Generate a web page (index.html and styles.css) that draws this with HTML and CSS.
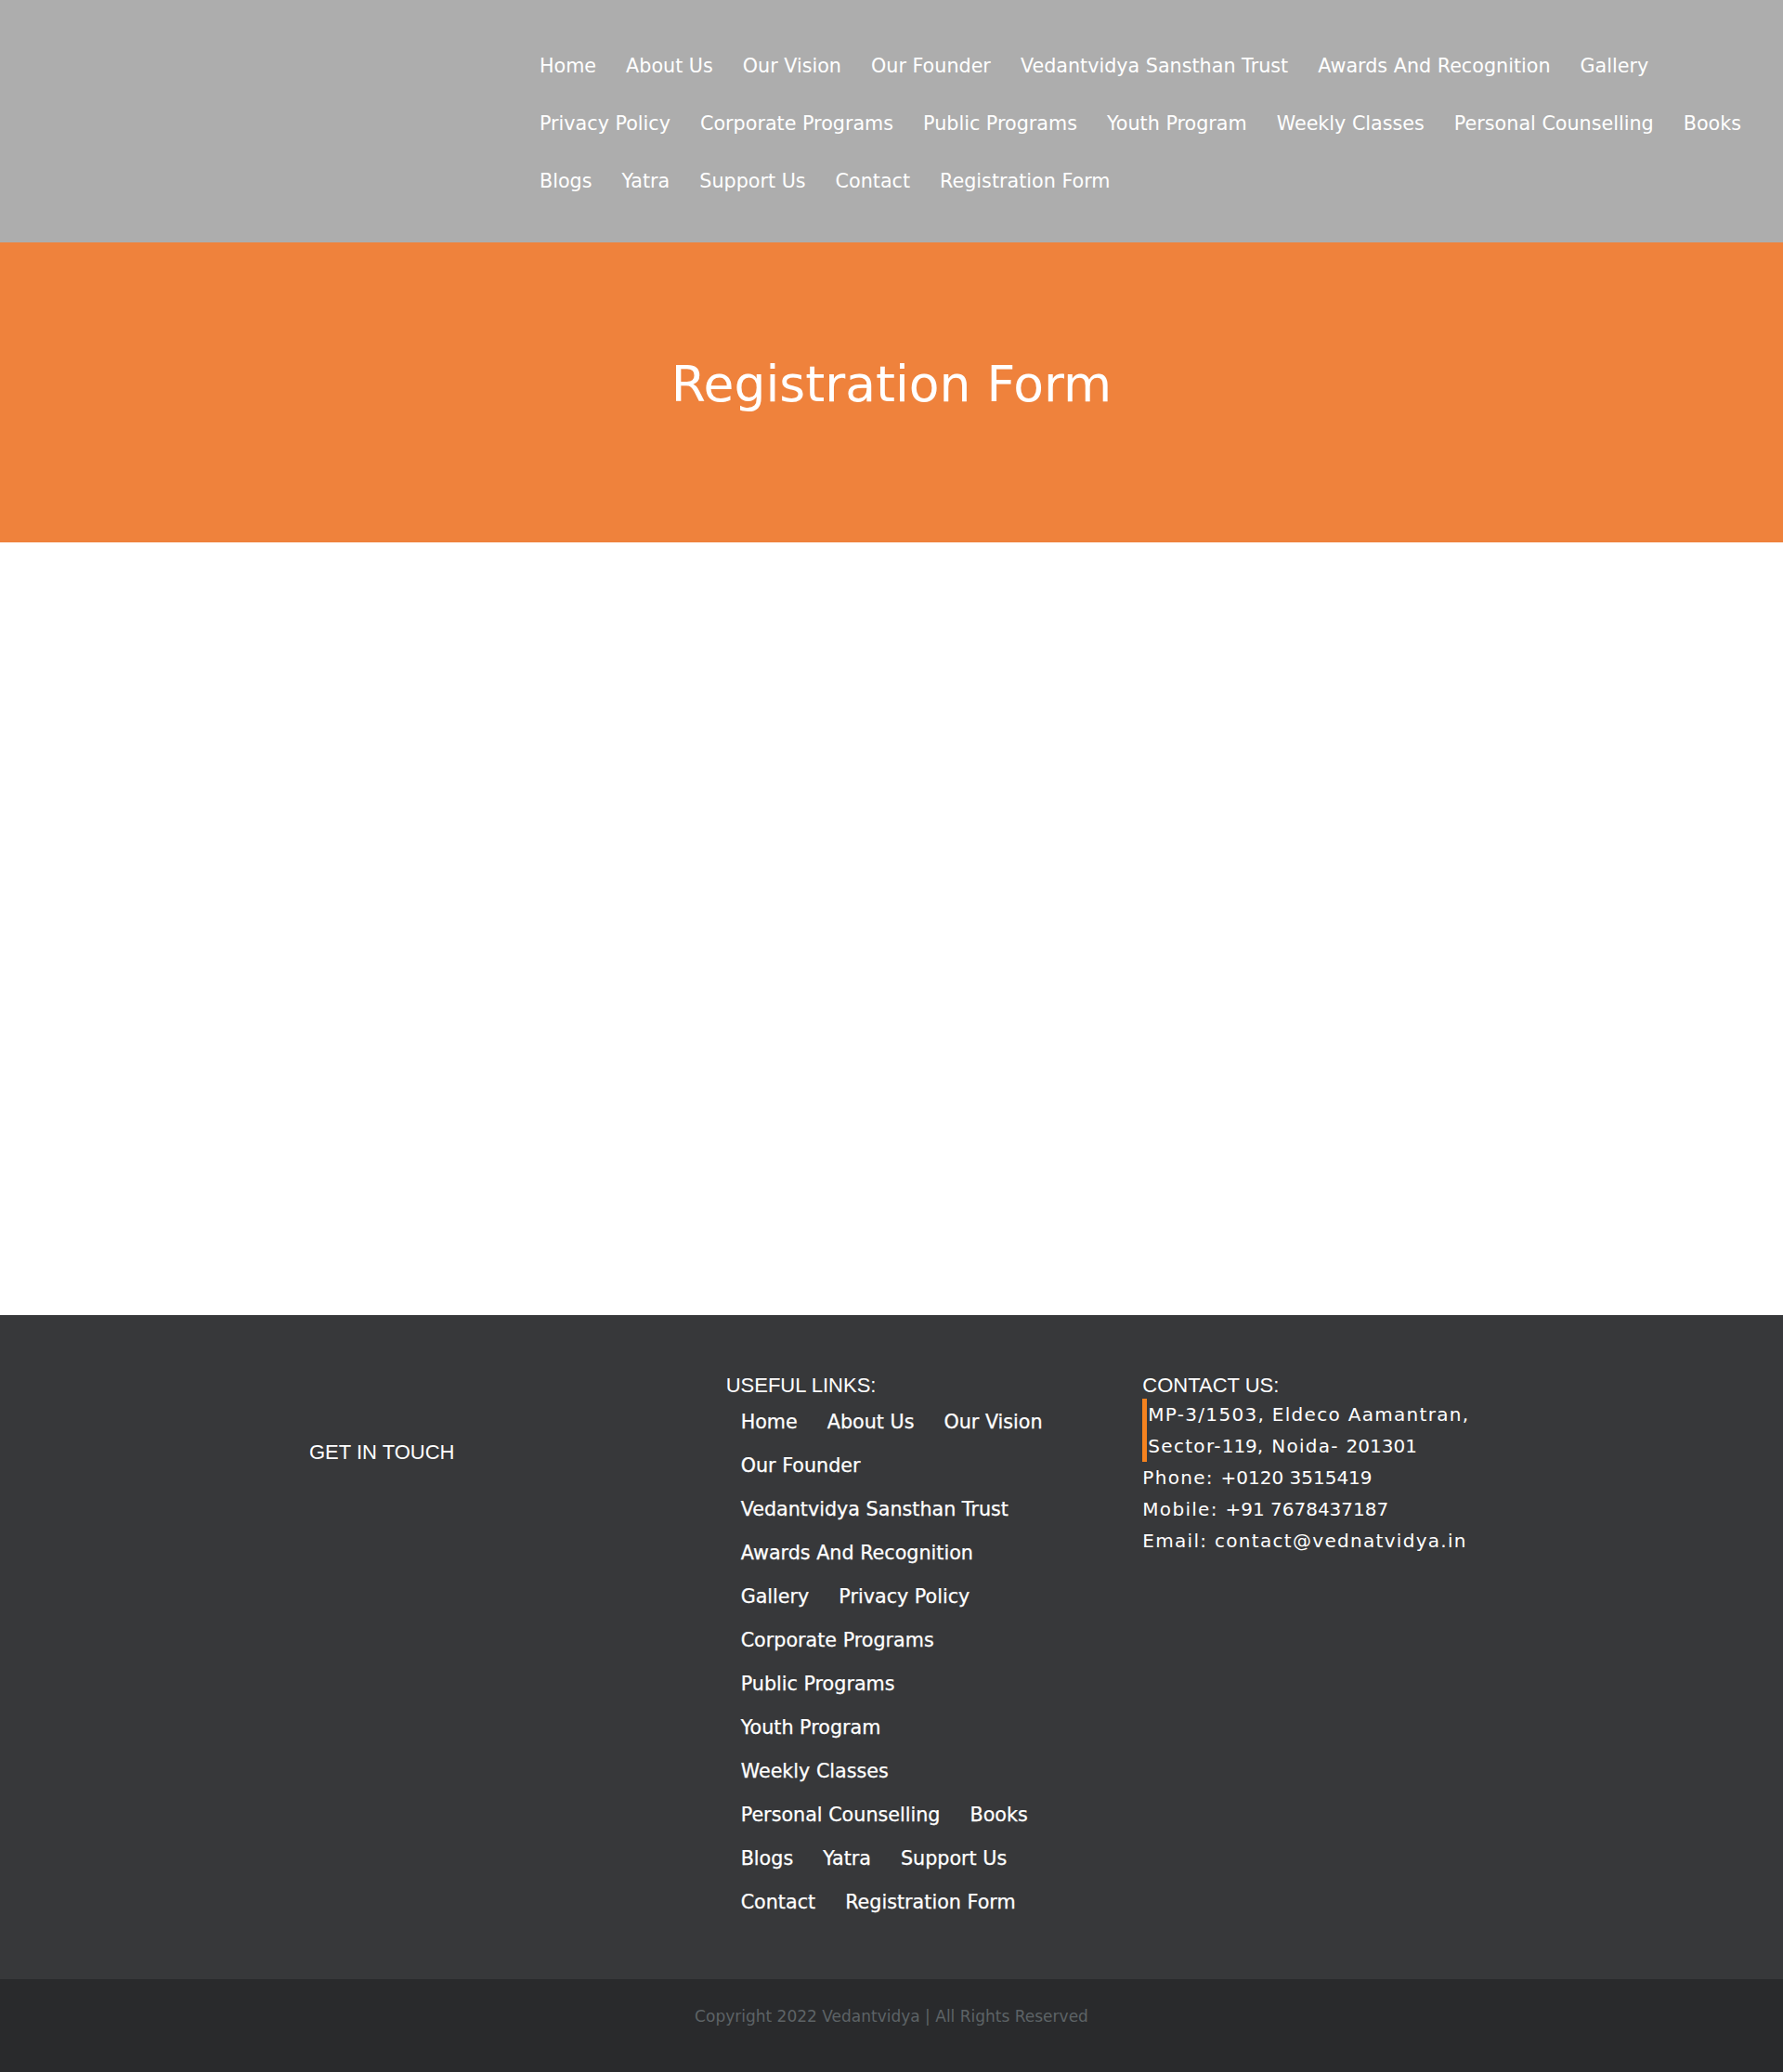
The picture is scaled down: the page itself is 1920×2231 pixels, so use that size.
FILE: index.html
```
<!DOCTYPE html>
<html lang="en">
<head>
<meta charset="utf-8">
<title>Registration Form – Vedantvidya</title>
<link rel="stylesheet" href="styles.css">
</head>
<body>
<header class="site-header">
  <nav class="main-nav">
    <ul class="nav-list">
      <li><a href="#">Home</a></li>
      <li><a href="#">About Us</a></li>
      <li><a href="#">Our Vision</a></li>
      <li><a href="#">Our Founder</a></li>
      <li><a href="#">Vedantvidya Sansthan Trust</a></li>
      <li><a href="#">Awards And Recognition</a></li>
      <li><a href="#">Gallery</a></li>
      <li><a href="#">Privacy Policy</a></li>
      <li><a href="#">Corporate Programs</a></li>
      <li><a href="#">Public Programs</a></li>
      <li><a href="#">Youth Program</a></li>
      <li><a href="#">Weekly Classes</a></li>
      <li><a href="#">Personal Counselling</a></li>
      <li><a href="#">Books</a></li>
      <li><a href="#">Blogs</a></li>
      <li><a href="#">Yatra</a></li>
      <li><a href="#">Support Us</a></li>
      <li><a href="#">Contact</a></li>
      <li><a href="#">Registration Form</a></li>
    </ul>
  </nav>
</header>

<section class="page-banner">
  <h1 class="page-title">Registration Form</h1>
</section>

<main class="page-content"></main>

<footer class="site-footer">
  <div class="footer-inner">
    <div class="footer-col">
      <h3 class="footer-heading touch-heading">GET IN TOUCH</h3>
    </div>
    <div class="footer-col">
      <h3 class="footer-heading">USEFUL LINKS:</h3>
      <ul class="footer-links">
        <li><a href="#">Home</a></li>
        <li><a href="#">About Us</a></li>
        <li><a href="#">Our Vision</a></li>
        <li><a href="#">Our Founder</a></li>
        <li><a href="#">Vedantvidya Sansthan Trust</a></li>
        <li><a href="#">Awards And Recognition</a></li>
        <li><a href="#">Gallery</a></li>
        <li><a href="#">Privacy Policy</a></li>
        <li><a href="#">Corporate Programs</a></li>
        <li><a href="#">Public Programs</a></li>
        <li><a href="#">Youth Program</a></li>
        <li><a href="#">Weekly Classes</a></li>
        <li><a href="#">Personal Counselling</a></li>
        <li><a href="#">Books</a></li>
        <li><a href="#">Blogs</a></li>
        <li><a href="#">Yatra</a></li>
        <li><a href="#">Support Us</a></li>
        <li><a href="#">Contact</a></li>
        <li><a href="#">Registration Form</a></li>
      </ul>
    </div>
    <div class="footer-col">
      <h3 class="footer-heading">CONTACT US:</h3>
      <div class="contact-info">
        <p class="address">MP-3/1503, Eldeco Aamantran,<br>Sector-<span class="num">119</span>, Noida- <span class="num">201301</span></p>
        <p class="contact-line">Phone: <span class="num">+0120 3515419</span></p>
        <p class="contact-line">Mobile: <span class="num">+91 7678437187</span></p>
        <p class="contact-line">Email: contact@vednatvidya.in</p>
      </div>
    </div>
  </div>
</footer>

<div class="footer-bottom">
  <p class="copyright">Copyright 2022 Vedantvidya | All Rights Reserved</p>
</div>
</body>
</html>
```

FILE: styles.css
```
* {
  box-sizing: border-box;
}

html, body {
  margin: 0;
  padding: 0;
}

body {
  width: 1920px;
  font-family: "DejaVu Sans", "Liberation Sans", sans-serif;
  color: #ffffff;
  background: #ffffff;
}

a {
  color: #ffffff;
  text-decoration: none;
}

ul {
  list-style: none;
  margin: 0;
  padding: 0;
}

/* Header */
.site-header {
  height: 261px;
  background: #adadad;
  padding: 40px 0 0 565px;
}

.nav-list {
  display: flex;
  flex-wrap: wrap;
}

.nav-list li {
  padding: 0 16px;
  font-size: 20.7px;
  line-height: 62px;
  white-space: nowrap;
}

/* Banner */
.page-banner {
  height: 323px;
  background: #ef823c;
  padding-top: 122px;
  text-align: center;
}

.page-title {
  margin: 0;
  font-size: 53.5px;
  line-height: 62px;
  font-weight: normal;
  color: #ffffff;
}

/* Content */
.page-content {
  height: 832px;
  background: #ffffff;
}

/* Footer */
.site-footer {
  height: 715px;
  background: #37383a;
  padding-top: 64px;
}

.footer-inner {
  display: grid;
  grid-template-columns: repeat(3, 448.67px);
  margin-left: 333px;
}

.footer-heading {
  margin: 0;
  font-family: "Liberation Sans", Arial, sans-serif;
  font-size: 22px;
  line-height: 24px;
  font-weight: normal;
  color: #ffffff;
}

.touch-heading {
  margin-top: 72px;
}

.footer-links {
  display: flex;
  flex-wrap: wrap;
  width: 370px;
  margin-top: 4px;
}

.footer-links li {
  padding: 0 16px;
  font-size: 20.7px;
  line-height: 47px;
  white-space: nowrap;
  -webkit-text-stroke: 0.25px #ffffff;
}

.contact-info {
  font-size: 20px;
  line-height: 34px;
  letter-spacing: 1.3px;
}

.contact-info .num {
  letter-spacing: 0;
}

.address {
  margin: 2px 0 0 0;
  border-left: 5px solid #f5821f;
  padding-left: 1px;
}

.contact-line {
  margin: 0;
}

/* Bottom bar */
.footer-bottom {
  height: 100px;
  background: #292a2c;
  padding-top: 28px;
  text-align: center;
}

.copyright {
  margin: 0;
  font-size: 17px;
  line-height: 24px;
  color: #5d6366;
}
```
